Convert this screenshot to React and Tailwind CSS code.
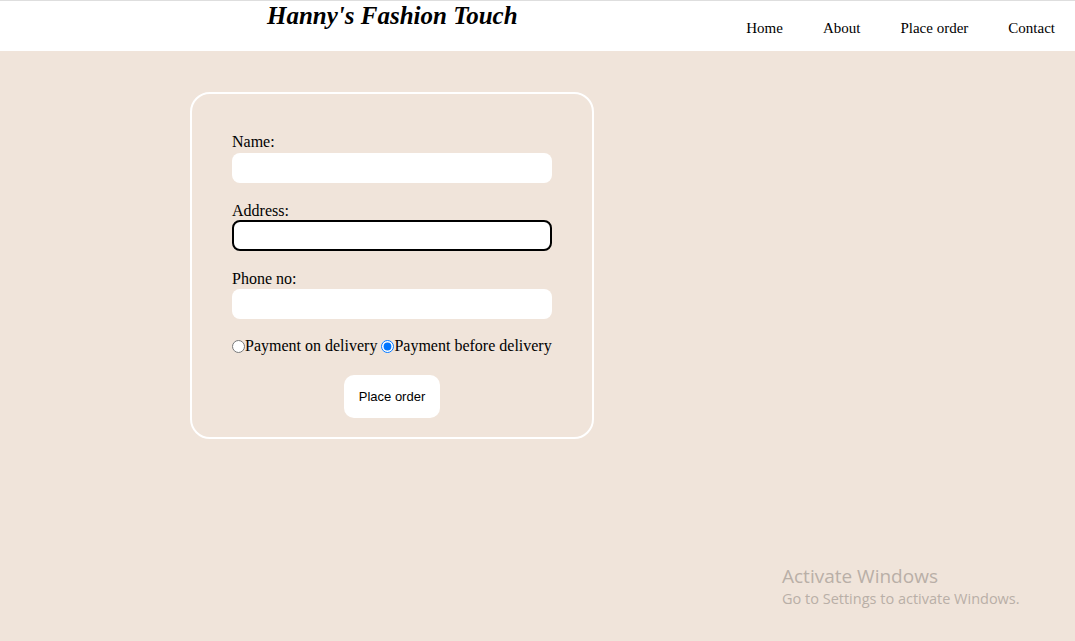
export default function App() {
  const serif = { fontFamily: '"Liberation Serif", "Times New Roman", serif' };
  return (
    <div className="relative min-h-[641px] w-full bg-[#f0e4da]" style={serif}>
      <header className="flex h-[51px] items-start justify-between border-t border-[#dedede] bg-white">
        <h1 className="pl-[267px] pt-[1px] text-[25px] font-bold italic leading-[28px] text-black">
          Hanny's Fashion Touch
        </h1>
        <nav className="flex gap-[40px] pr-[20px] pt-[18px] text-[15px] leading-[18px] text-black">
          <a>Home</a>
          <a>About</a>
          <a>Place order</a>
          <a>Contact</a>
        </nav>
      </header>

      <div className="pl-[190px] pt-[41px]">
        <form className="flex w-[404px] flex-col rounded-[20px] border-2 border-white px-[40px] pb-[19px] pt-[39px]">
          <label className="text-[16px] leading-[18px] text-black">Name:</label>
          <input className="mt-[2px] h-[30px] w-[320px] rounded-[8px] bg-white outline-none" />
          <label className="mt-[19px] text-[16px] leading-[18px] text-black">Address:</label>
          <input className="mt-0 h-[31px] w-[320px] rounded-[8px] border-2 border-black bg-white outline-none" />
          <label className="mt-[19px] text-[16px] leading-[18px] text-black">Phone no:</label>
          <input className="mt-[1px] h-[30px] w-[320px] rounded-[8px] bg-white outline-none" />
          <div className="mt-[18px] flex items-center text-[16px] leading-[18px] text-black">
            <input type="radio" name="pay" className="m-0 h-[13px] w-[13px] accent-[#0075ff]" />
            <span>Payment on delivery</span>
            <span className="w-[4px]" />
            <input type="radio" name="pay" defaultChecked className="m-0 h-[13px] w-[13px] accent-[#0075ff]" />
            <span>Payment before delivery</span>
          </div>
          <div className="mt-[20px] flex justify-center">
            <button
              type="button"
              className="h-[43px] w-[96px] rounded-[10px] bg-white text-[13px] text-black"
              style={{ fontFamily: '"Liberation Sans", Arial, sans-serif' }}
            >
              Place order
            </button>
          </div>
        </form>
      </div>

      <div
        className="absolute left-[782px] top-[564px] text-[#b9afa7]"
        style={{ fontFamily: '"Open Sans", "Noto Sans", sans-serif' }}
      >
        <div className="text-[19px] leading-[24px]">Activate Windows</div>
        <div className="text-[14.5px] leading-[22px]">Go to Settings to activate Windows.</div>
      </div>
    </div>
  );
}
